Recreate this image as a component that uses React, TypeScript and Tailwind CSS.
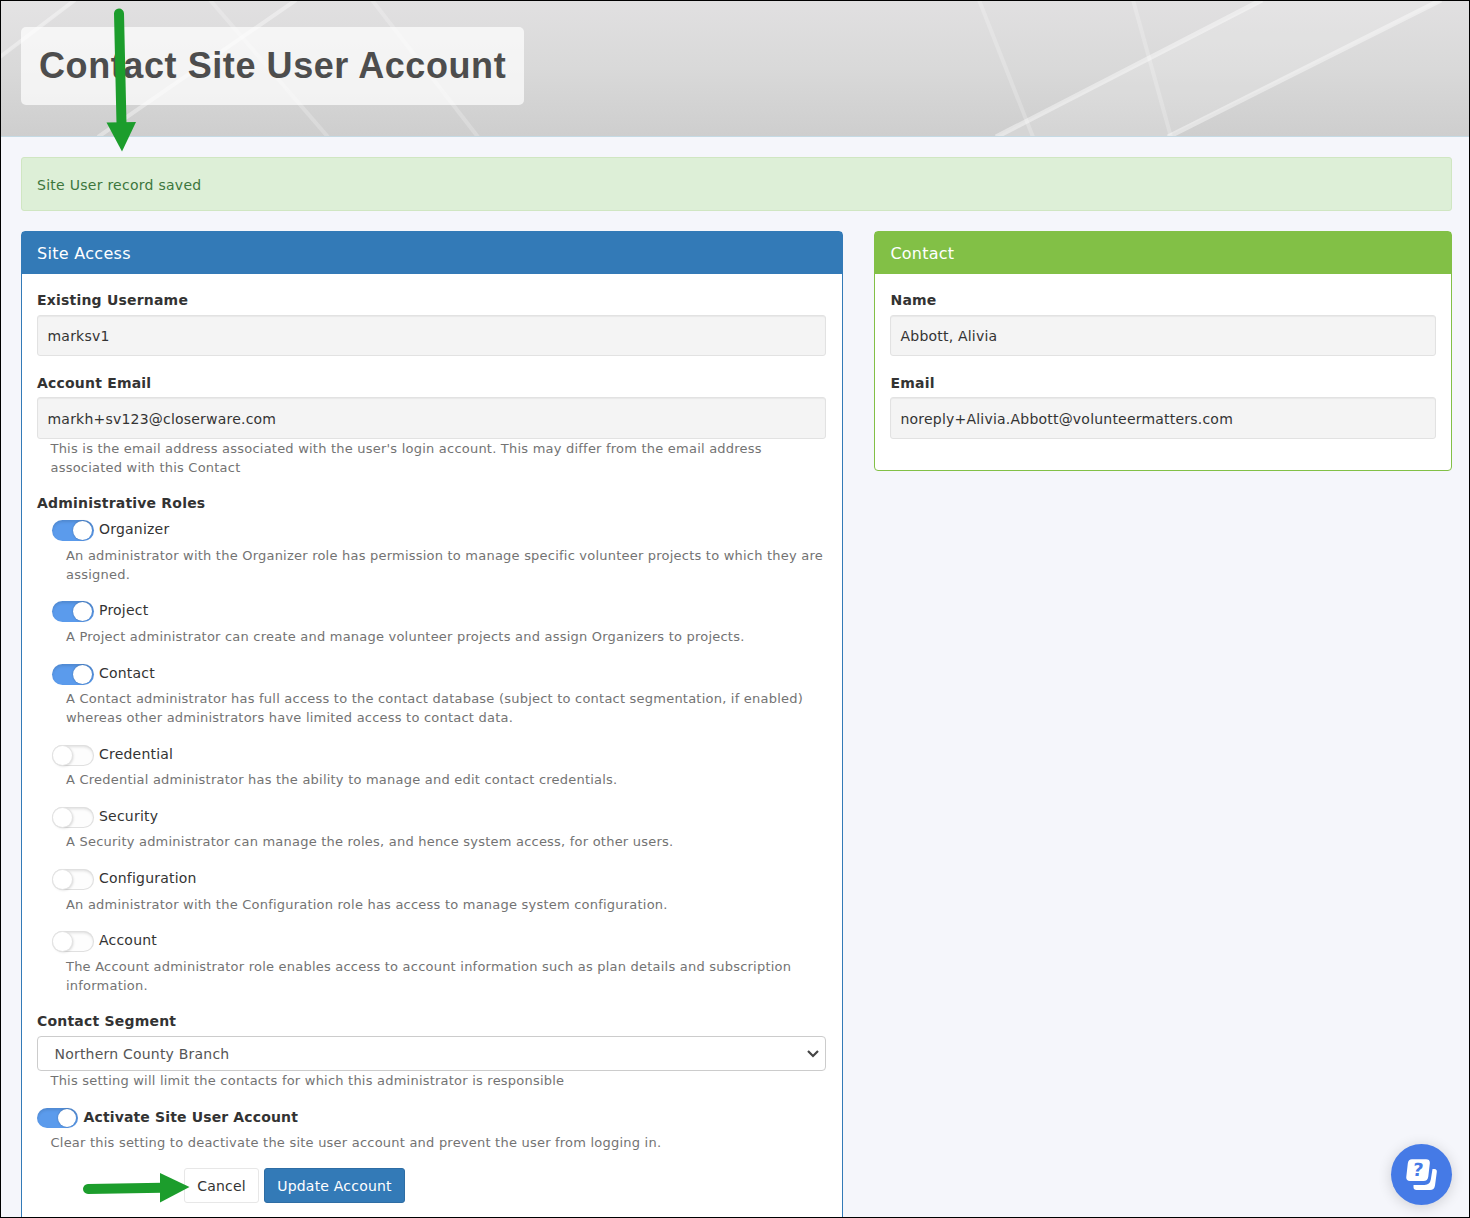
import { useState } from 'react'
import type { ReactNode } from 'react'
import clsx from 'clsx'

interface Role {
  name: string
  help: string[]
  enabled: boolean
}

const initialRoles: Role[] = [
  {
    name: 'Organizer',
    help: [
      'An administrator with the Organizer role has permission to manage specific volunteer projects to which they are',
      'assigned.',
    ],
    enabled: true,
  },
  {
    name: 'Project',
    help: ['A Project administrator can create and manage volunteer projects and assign Organizers to projects.'],
    enabled: true,
  },
  {
    name: 'Contact',
    help: [
      'A Contact administrator has full access to the contact database (subject to contact segmentation, if enabled)',
      'whereas other administrators have limited access to contact data.',
    ],
    enabled: true,
  },
  {
    name: 'Credential',
    help: ['A Credential administrator has the ability to manage and edit contact credentials.'],
    enabled: false,
  },
  {
    name: 'Security',
    help: ['A Security administrator can manage the roles, and hence system access, for other users.'],
    enabled: false,
  },
  {
    name: 'Configuration',
    help: ['An administrator with the Configuration role has access to manage system configuration.'],
    enabled: false,
  },
  {
    name: 'Account',
    help: [
      'The Account administrator role enables access to account information such as plan details and subscription',
      'information.',
    ],
    enabled: false,
  },
]

const Switch = ({ checked, onChange, small }: { checked: boolean; onChange: () => void; small?: boolean }) => (
  <button
    type="button"
    role="switch"
    aria-checked={checked}
    onClick={onChange}
    className={clsx(
      'flex shrink-0 items-center rounded-full p-px',
      small ? 'h-5 w-[41px]' : 'h-[21px] w-[42px]',
      checked
        ? 'justify-end bg-[#5b9bec] pr-[2px] shadow-[inset_0_2px_3px_rgba(0,0,0,0.12)]'
        : 'justify-start bg-[#fdfdfd] shadow-[inset_0_0_0_1px_#e0e0e0,inset_0_2px_3px_rgba(0,0,0,0.12)]',
    )}
  >
    <span
      className={clsx(
        'rounded-full bg-white',
        small ? 'size-[18px]' : 'size-[19px]',
        checked ? 'shadow-[0_0_2px_rgba(0,0,0,0.3)]' : 'shadow-[0_0_0_1px_#e4e4e4,1px_1px_3px_rgba(0,0,0,0.2)]',
      )}
    />
  </button>
)

// One or more lines of muted text under a control
const Help = ({ lines, className }: { lines: string[]; className?: string }) => (
  <div className={clsx('text-[13px] leading-[19px] tracking-[0.22px] whitespace-nowrap text-[#737373]', className)}>
    {lines.map((line) => (
      <p key={line}>{line}</p>
    ))}
  </div>
)

const Label = ({ children }: { children: ReactNode }) => (
  <label className="block h-5 text-sm leading-5 font-bold tracking-[0.2px]">{children}</label>
)

const ReadOnlyField = ({ value, className }: { value: string; className: string }) => (
  <div
    className={clsx(
      'flex items-center rounded-[3px] border border-[#e2e2e2] bg-[#f4f4f4] px-[9.5px] shadow-[inset_0_1px_1px_rgba(0,0,0,0.05)]',
      className,
    )}
  >
    {value}
  </div>
)

const HeaderLines = () => (
  <svg className="absolute inset-0" width="1468" height="135" viewBox="1 1 1468 135" fill="none" stroke="white">
    <path d="M1262 1 997 136H1168L1441 1Z" fill="white" fillOpacity="0.14" stroke="none" />
    <path d="M1 1H75L1 57Z" fill="white" fillOpacity="0.1" stroke="none" />
    <g strokeOpacity="0.38" strokeWidth="4">
      <path d="M75 0 0 57" />
      <path d="M296 0 98 137" />
    </g>
    <g strokeOpacity="0.22" strokeWidth="4">
      <path d="M210 0 328 137" />
      <path d="M372 0 478 137" />
      <path d="M979 0 1033 137" />
      <path d="M1133 0 1171 137" />
    </g>
    <g strokeOpacity="0.42" strokeWidth="5">
      <path d="M1262 0 996 137" />
      <path d="M1441 0 1168 137" />
    </g>
  </svg>
)

const ChatIcon = () => (
  <svg width="32" height="32" viewBox="0 0 32 32">
    <path
      d="M26.500 10H28.500Q31.200 10.300 30.800 13L29 26.500Q28.300 31 24 31H10.500Q7.600 31 7.500 28.300V26H18.500Q24 25.700 24.800 20.500Z"
      fill="white"
    />
    <path d="M6 .3H20Q24.300 .3 23.800 4.500L22.300 17.500Q21.700 22 17.500 22H4Q-.2 22 .3 17.700L1.800 4.500Q2.400 .3 6 .3Z" fill="white" />
    <text x="12" y="17.500" textAnchor="middle" fontSize="18" fontWeight="bold" fill="#457ae6" fontFamily="DejaVu Sans, sans-serif" transform="skewX(-6) translate(1.500 0)">
      ?
    </text>
  </svg>
)

const App = () => {
  const [roles, setRoles] = useState(initialRoles)
  const [active, setActive] = useState(true)

  const toggleRole = (name: string) =>
    setRoles((prev) => prev.map((r) => (r.name === name ? { ...r, enabled: !r.enabled } : r)))

  return (
    <div className="relative h-[1218px] w-[1470px] overflow-hidden border border-black bg-[#f5f6fb] font-['DejaVu_Sans',sans-serif] text-sm tracking-[0.21px] text-[#333]">
      <header className="relative h-[136px] border-b border-[#c5dae4] bg-linear-to-b from-[#e1e0e1] via-[#d9d9d9] to-[#cecece] px-5 pt-[26px]">
        <HeaderLines />
        <div className="relative flex h-[78px] w-[503px] items-center rounded-[5px] bg-white/70 px-[18px]">
          <h1 className="font-['Liberation_Sans',sans-serif] text-[36px] font-bold tracking-[0.58px] whitespace-nowrap text-[#4d4d4d]">
            Contact Site User Account
          </h1>
        </div>
      </header>

      <main className="px-5 pt-5 pr-[17px]">
        <div className="flex h-[54px] items-center rounded-[3px] border border-[#d0e6c2] bg-[#ddefd7] px-[15px] pt-[2px] tracking-[0.27px] text-[#3c763d]">
          Site User record saved
        </div>

        <div className="mt-5 flex items-start gap-[31px]">
          <section className="h-[1000px] w-[822px] rounded-[4px] border border-[#337ab7] bg-white">
            <h2 className="flex h-[42px] items-center bg-[#337ab7] px-[15px] pt-[2px] text-base tracking-[0.3px] text-white">Site Access</h2>
            <div className="pt-4 pr-4 pl-[15px]">
              <Label>Existing Username</Label>
              <ReadOnlyField value="marksv1" className="mt-[5px] h-[41px]" />
              <div className="mt-[17px]">
                <Label>Account Email</Label>
              </div>
              <ReadOnlyField value="markh+sv123@closerware.com" className="mt-1 h-[42px] pt-[2px]" />
              <Help
                className="pl-[13.5px]"
                lines={[
                  "This is the email address associated with the user's login account. This may differ from the email address",
                  'associated with this Contact',
                ]}
              />

              <div className="mt-4">
                <Label>Administrative Roles</Label>
              </div>
              <ul className="pt-[7.35px] pl-[15px]">
                {roles.map((role) => (
                  <li key={role.name} className={role.help.length > 1 ? 'h-[81px]' : 'h-[62.2px]'}>
                    <div className="flex h-[21px] gap-[5px]">
                      <Switch checked={role.enabled} onChange={() => toggleRole(role.name)} />
                      <span className="-mt-px leading-5">{role.name}</span>
                    </div>
                    <Help className="pt-[4.65px] pl-[14px]" lines={role.help} />
                  </li>
                ))}
              </ul>

              <div className="-mt-[1.35px]">
                <Label>Contact Segment</Label>
              </div>
              <div className="relative mt-[5px]">
                <select className="block h-[35px] w-full appearance-none rounded border border-[#ccc] bg-white pt-[2px] pl-[16.5px] text-[#555]">
                  <option>Northern County Branch</option>
                </select>
                <svg className="pointer-events-none absolute top-[13px] right-[6px]" width="14" height="10" viewBox="0 0 14 10" fill="none">
                  <path d="M2 2 7 7 12 2" stroke="#454545" strokeWidth="2.200" />
                </svg>
              </div>
              <Help className="pl-[13.5px]" lines={['This setting will limit the contacts for which this administrator is responsible']} />

              <div className="mt-[18px] flex h-5 gap-[5.5px]">
                <Switch small checked={active} onChange={() => setActive(!active)} />
                <span className="-mt-px leading-5 font-bold tracking-[0.14px]">Activate Site User Account</span>
              </div>
              <Help
                className="pt-[5px] pl-[13.5px]"
                lines={['Clear this setting to deactivate the site user account and prevent the user from logging in.']}
              />
              <div className="mt-4 flex gap-[5px] pl-[147px]">
                <button className="h-[35px] w-[75px] rounded-[3px] border border-[#e7e7e7] bg-white pt-[1px]">Cancel</button>
                <button className="h-[35px] w-[141px] rounded-[3px] border border-[#2e6da4] bg-[#337ab7] pt-[1px] text-white">
                  Update Account
                </button>
              </div>
            </div>
          </section>

          <section className="h-[240px] w-[578px] rounded-[4px] border border-[#82c046] bg-white">
            <h2 className="flex h-[42px] items-center bg-[#82c046] px-[15.5px] pt-[2px] text-base tracking-[0.2px] text-white">Contact</h2>
            <div className="px-[15px] pt-4">
              <div className="pl-[0.5px]">
                <Label>Name</Label>
              </div>
              <ReadOnlyField value="Abbott, Alivia" className="mt-[5px] h-[41px]" />
              <div className="mt-[17px] pl-[0.5px]">
                <Label>Email</Label>
              </div>
              <ReadOnlyField value="noreply+Alivia.Abbott@volunteermatters.com" className="mt-1 h-[42px] pt-[2px]" />
            </div>
          </section>
        </div>
      </main>

      {/* Callout arrows */}
      <svg className="pointer-events-none absolute top-0 left-0" width="220" height="1216" viewBox="1 1 220 1216" fill="#1c9d2c" stroke="#1c9d2c">
        <path d="M119 13.500 121.500 124" strokeWidth="10" strokeLinecap="round" />
        <path d="M106.500 122.500 136 122 122 151.500Z" stroke="none" />
        <path d="M88 1189 162 1187.800" strokeWidth="10" strokeLinecap="round" />
        <path d="M160 1173 189.500 1187 160 1202.500Z" stroke="none" />
      </svg>

      <button className="absolute right-[17px] bottom-3 flex size-[61px] items-center justify-center rounded-full bg-[#457ae6] shadow-[0_2px_14px_rgba(0,0,0,0.16)]">
        <ChatIcon />
      </button>
    </div>
  )
}

export default App
